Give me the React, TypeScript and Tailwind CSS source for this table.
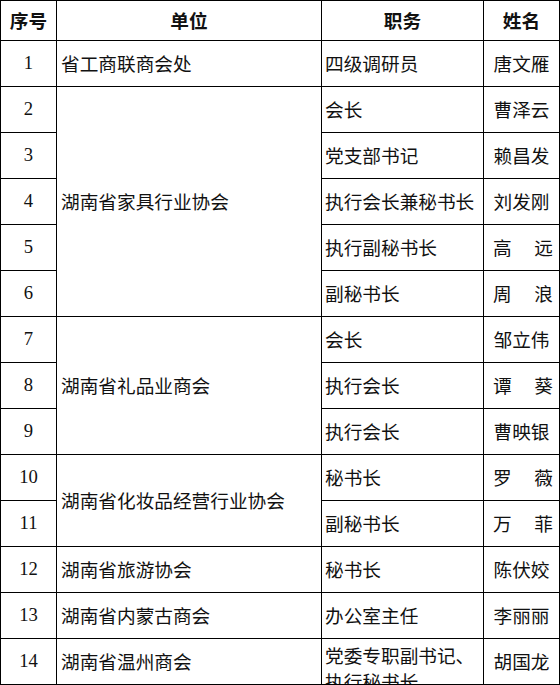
import React from "react";

type Row = { n: number; pos: string; name: string };

const rows: Row[] = [
  { n: 1, pos: "四级调研员", name: "唐文雁" },
  { n: 2, pos: "会长", name: "曹泽云" },
  { n: 3, pos: "党支部书记", name: "赖昌发" },
  { n: 4, pos: "执行会长兼秘书长", name: "刘发刚" },
  { n: 5, pos: "执行副秘书长", name: "高远" },
  { n: 6, pos: "副秘书长", name: "周浪" },
  { n: 7, pos: "会长", name: "邹立伟" },
  { n: 8, pos: "执行会长", name: "谭葵" },
  { n: 9, pos: "执行会长", name: "曹映银" },
  { n: 10, pos: "秘书长", name: "罗薇" },
  { n: 11, pos: "副秘书长", name: "万菲" },
  { n: 12, pos: "秘书长", name: "陈伏姣" },
  { n: 13, pos: "办公室主任", name: "李丽丽" },
  { n: 14, pos: "党委专职副书记、执行秘书长", name: "胡国龙" },
];

const units: { row: number; span: number; text: string }[] = [
  { row: 2, span: 1, text: "省工商联商会处" },
  { row: 3, span: 5, text: "湖南省家具行业协会" },
  { row: 8, span: 3, text: "湖南省礼品业商会" },
  { row: 11, span: 2, text: "湖南省化妆品经营行业协会" },
  { row: 13, span: 1, text: "湖南省旅游协会" },
  { row: 14, span: 1, text: "湖南省内蒙古商会" },
  { row: 15, span: 1, text: "湖南省温州商会" },
];

const cell = "border-r border-b border-black overflow-hidden";
const head = `${cell} row-start-1 flex items-center justify-center font-bold`;

export default function App() {
  return (
    <div className="w-[560px] h-[685px] bg-white overflow-hidden">
      <div className="grid grid-cols-[56px_265px_162px_76px] grid-rows-[40px_repeat(14,46px)] border-t border-l border-black text-[#111] text-[18.67px] leading-none font-['Noto_Sans_CJK_SC','Noto_Sans',sans-serif]">
        <div className={`${head} col-start-1`}>序号</div>
        <div className={`${head} col-start-2`}>单位</div>
        <div className={`${head} col-start-3`}>职务</div>
        <div className={`${head} col-start-4`}>姓名</div>

        {rows.map((r, i) => (
          <React.Fragment key={r.n}>
            <div
              className={`${cell} col-start-1 flex items-center justify-center font-['Liberation_Serif','Noto_Sans_CJK_SC',serif]`}
              style={{ gridRowStart: i + 2 }}
            >
              {r.n}
            </div>
            {r.n === 14 ? (
              <div
                className={`${cell} col-start-3 pl-[3px] pt-[3px] leading-[26px]`}
                style={{ gridRowStart: i + 2 }}
              >
                党委专职副书记、
                <br />
                执行秘书长
              </div>
            ) : (
              <div
                className={`${cell} col-start-3 flex items-center pl-[3px]`}
                style={{ gridRowStart: i + 2 }}
              >
                {r.pos}
              </div>
            )}
            {r.name.length === 2 ? (
              <div
                className={`${cell} col-start-4 flex items-center justify-between pl-[9px] pr-[6px]`}
                style={{ gridRowStart: i + 2 }}
              >
                <span>{r.name[0]}</span>
                <span>{r.name[1]}</span>
              </div>
            ) : (
              <div
                className={`${cell} col-start-4 flex items-center justify-center`}
                style={{ gridRowStart: i + 2 }}
              >
                {r.name}
              </div>
            )}
          </React.Fragment>
        ))}

        {units.map((u) => (
          <div
            key={u.text}
            className={`${cell} col-start-2 flex items-center pl-[4px]`}
            style={{ gridRow: `${u.row} / span ${u.span}` }}
          >
            {u.text}
          </div>
        ))}
      </div>
    </div>
  );
}
